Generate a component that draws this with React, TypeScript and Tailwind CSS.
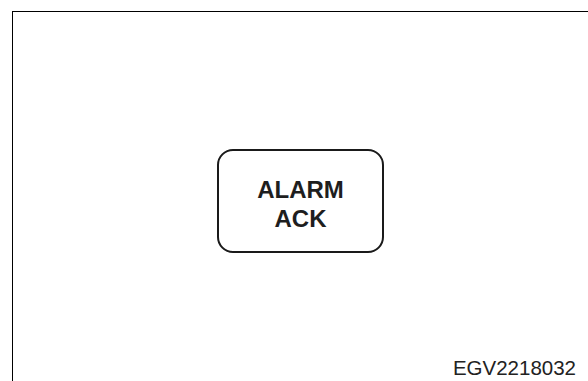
export default function App() {
  return (
    <div className="w-[588px] h-[381px] bg-white pl-[12px] pt-[11px] flex font-['Liberation_Sans',Arial,sans-serif]">
      <div className="flex-1 flex flex-col border-t border-l border-black">
        <div className="mx-auto mt-[137px] w-[167px] h-[104px] rounded-[16px] border-2 border-[#1a1a1a] flex items-center justify-center pt-[5px]">
          <div className="text-center font-bold text-[24px] leading-[29px] text-[#1e1e1e]">
            ALARM
            <br />
            ACK
          </div>
        </div>
        <div className="mt-auto pr-[12px] pb-[1px] text-right text-[20.5px] leading-[24px] text-[#222]">
          EGV2218032
        </div>
      </div>
    </div>
  );
}
